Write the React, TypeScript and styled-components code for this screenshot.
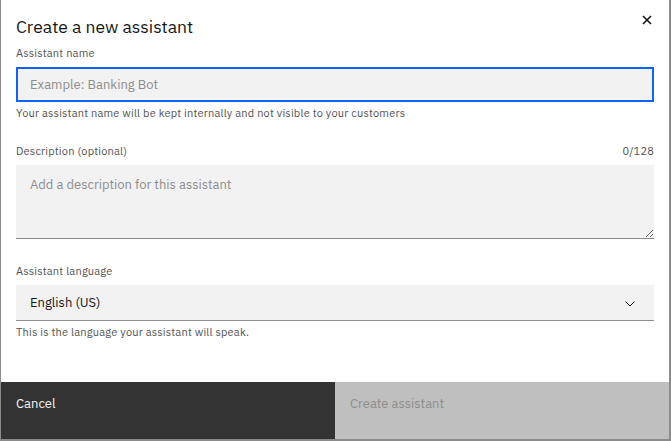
import React from "react";
import styled, { createGlobalStyle } from "styled-components";

const Global = createGlobalStyle`
  html, body { margin: 0; padding: 0; background: #8b8b8b; }
  body { font-family: "IBM Plex Sans", Roboto, "Noto Sans", sans-serif; }
  * { box-sizing: border-box; }
`;

const Backdrop = styled.div`
  width: 671px;
  height: 441px;
  display: flex;
  padding: 0 2px 2px 1px;
  background: #8b8b8b;
`;

const Modal = styled.div`
  flex: 1;
  background: #ffffff;
  display: flex;
  flex-direction: column;
  color: #161616;
`;

const Header = styled.div`
  display: flex;
  justify-content: space-between;
  align-items: flex-start;
  padding: 15px 17px 0 15px;
`;

const Title = styled.h2`
  margin: 0;
  font-size: 17.5px;
  line-height: 24px;
  font-weight: 400;
  color: #161616;
`;

const CloseButton = styled.button`
  border: 0;
  background: transparent;
  padding: 0;
  margin-top: 0;
  width: 10px;
  height: 10px;
  display: flex;
  cursor: pointer;
`;

const Body = styled.div`
  display: flex;
  flex-direction: column;
  padding: 0 15px;
`;

const Field = styled.div<{ $top: number }>`
  display: flex;
  flex-direction: column;
  margin-top: ${(p) => p.$top}px;
`;

const LabelRow = styled.div`
  display: flex;
  justify-content: space-between;
  margin-bottom: 7px;
`;

const Label = styled.label`
  font-size: 11px;
  line-height: 14px;
  color: #525252;
  letter-spacing: 0.2px;
`;

const Counter = styled.span`
  font-size: 11px;
  line-height: 14px;
  color: #525252;
  letter-spacing: 0.2px;
`;

const TextInput = styled.input`
  height: 35px;
  width: 100%;
  border: 2px solid #0f62fe;
  outline: none;
  background: #f2f2f2;
  padding: 0 12px;
  font-family: inherit;
  font-size: 13px;
  color: #161616;
  caret-color: #161616;
  &::placeholder { color: #8d8d8d; }
`;

const TextArea = styled.textarea`
  height: 74px;
  width: 100%;
  border: 0;
  border-bottom: 1px solid #8d8d8d;
  outline: none;
  background: #f2f2f2;
  padding: 11px 14px 9px;
  font-family: inherit;
  font-size: 13px;
  line-height: 18px;
  color: #161616;
  resize: vertical;
  &::placeholder { color: #8d8d8d; }
`;

const Helper = styled.div`
  margin-top: 4px;
  font-size: 11px;
  line-height: 14px;
  color: #525252;
  letter-spacing: 0.2px;
`;

const SelectWrap = styled.div`
  position: relative;
  height: 36px;
`;

const Select = styled.select`
  appearance: none;
  width: 100%;
  height: 36px;
  border: 0;
  border-bottom: 1px solid #8d8d8d;
  background: #f2f2f2;
  padding: 0 40px 0 14px;
  font-family: inherit;
  font-size: 13px;
  color: #161616;
  outline: none;
`;

const Chevron = styled.svg`
  position: absolute;
  right: 19px;
  top: 16px;
  pointer-events: none;
`;

const Footer = styled.div`
  margin-top: auto;
  height: 57px;
  display: flex;
`;

const FooterButton = styled.button<{ $kind: "secondary" | "disabled" }>`
  flex: 1;
  border: 0;
  text-align: left;
  display: flex;
  align-items: flex-start;
  padding: 13px 15px;
  font-family: inherit;
  font-size: 13px;
  line-height: 18px;
  background: ${(p) => (p.$kind === "secondary" ? "#333333" : "#bfbfbf")};
  color: ${(p) => (p.$kind === "secondary" ? "#f4f4f4" : "#8d8d8d")};
  cursor: ${(p) => (p.$kind === "secondary" ? "pointer" : "not-allowed")};
`;

export default function App() {
  return (
    <>
      <Global />
      <Backdrop>
        <Modal>
          <Header>
            <Title>Create a new assistant</Title>
            <CloseButton aria-label="Close">
              <svg width="10" height="10" viewBox="0 0 10 10">
                <path d="M1 1 L9 9 M9 1 L1 9" stroke="#161616" strokeWidth="1.6" fill="none" />
              </svg>
            </CloseButton>
          </Header>
          <Body>
            <Field $top={7}>
              <LabelRow>
                <Label>Assistant name</Label>
              </LabelRow>
              <TextInput autoFocus placeholder="Example: Banking Bot" />
              <Helper>Your assistant name will be kept internally and not visible to your customers</Helper>
            </Field>
            <Field $top={24}>
              <LabelRow>
                <Label>Description (optional)</Label>
                <Counter>0/128</Counter>
              </LabelRow>
              <TextArea placeholder="Add a description for this assistant" />
            </Field>
            <Field $top={25}>
              <LabelRow>
                <Label>Assistant language</Label>
              </LabelRow>
              <SelectWrap>
                <Select defaultValue="en-US">
                  <option value="en-US">English (US)</option>
                </Select>
                <Chevron width="10" height="6" viewBox="0 0 10 6">
                  <path d="M0.5 0.5 L5 5 L9.5 0.5" stroke="#161616" strokeWidth="1" fill="none" />
                </Chevron>
              </SelectWrap>
              <Helper>This is the language your assistant will speak.</Helper>
            </Field>
          </Body>
          <Footer>
            <FooterButton $kind="secondary">Cancel</FooterButton>
            <FooterButton $kind="disabled" disabled>Create assistant</FooterButton>
          </Footer>
        </Modal>
      </Backdrop>
    </>
  );
}
